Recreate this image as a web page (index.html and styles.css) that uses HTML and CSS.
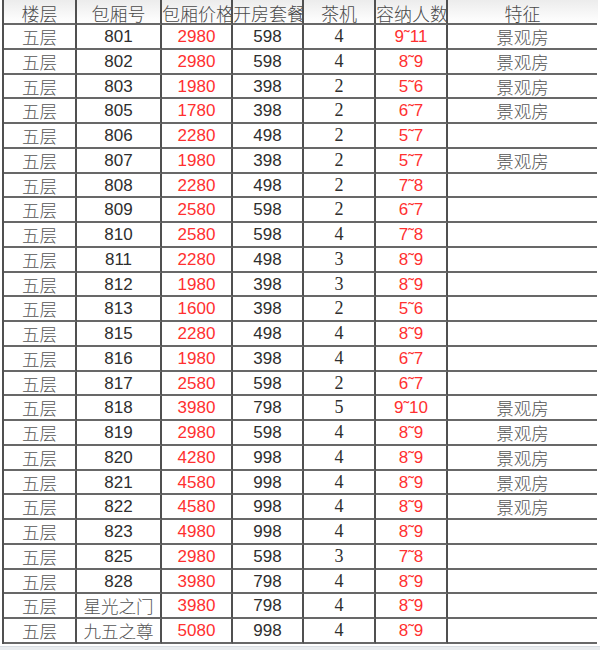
FILE: index.html
```html
<!DOCTYPE html>
<html lang="zh">
<head>
<meta charset="utf-8">
<title>包厢价格表</title>
<link rel="stylesheet" href="styles.css">
</head>
<body>
<div class="sheet">
  <div class="cell hd">楼层</div><div class="cell hd">包厢号</div><div class="cell hd">包厢价格</div><div class="cell hd">开房套餐</div><div class="cell hd">茶机</div><div class="cell hd">容纳人数</div><div class="cell hd last">特征</div>

  <div class="cell cn">五层</div><div class="cell num">801</div><div class="cell num red">2980</div><div class="cell num">598</div><div class="cell serif">4</div><div class="cell num red">9˜11</div><div class="cell cn last">景观房</div>
  <div class="cell cn">五层</div><div class="cell num">802</div><div class="cell num red">2980</div><div class="cell num">598</div><div class="cell serif">4</div><div class="cell num red">8˜9</div><div class="cell cn last">景观房</div>
  <div class="cell cn">五层</div><div class="cell num">803</div><div class="cell num red">1980</div><div class="cell num">398</div><div class="cell serif">2</div><div class="cell num red">5˜6</div><div class="cell cn last">景观房</div>
  <div class="cell cn">五层</div><div class="cell num">805</div><div class="cell num red">1780</div><div class="cell num">398</div><div class="cell serif">2</div><div class="cell num red">6˜7</div><div class="cell cn last">景观房</div>
  <div class="cell cn">五层</div><div class="cell num">806</div><div class="cell num red">2280</div><div class="cell num">498</div><div class="cell serif">2</div><div class="cell num red">5˜7</div><div class="cell cn last"></div>
  <div class="cell cn">五层</div><div class="cell num">807</div><div class="cell num red">1980</div><div class="cell num">398</div><div class="cell serif">2</div><div class="cell num red">5˜7</div><div class="cell cn last">景观房</div>
  <div class="cell cn">五层</div><div class="cell num">808</div><div class="cell num red">2280</div><div class="cell num">498</div><div class="cell serif">2</div><div class="cell num red">7˜8</div><div class="cell cn last"></div>
  <div class="cell cn">五层</div><div class="cell num">809</div><div class="cell num red">2580</div><div class="cell num">598</div><div class="cell serif">2</div><div class="cell num red">6˜7</div><div class="cell cn last"></div>
  <div class="cell cn">五层</div><div class="cell num">810</div><div class="cell num red">2580</div><div class="cell num">598</div><div class="cell serif">4</div><div class="cell num red">7˜8</div><div class="cell cn last"></div>
  <div class="cell cn">五层</div><div class="cell num">811</div><div class="cell num red">2280</div><div class="cell num">498</div><div class="cell serif">3</div><div class="cell num red">8˜9</div><div class="cell cn last"></div>
  <div class="cell cn">五层</div><div class="cell num">812</div><div class="cell num red">1980</div><div class="cell num">398</div><div class="cell serif">3</div><div class="cell num red">8˜9</div><div class="cell cn last"></div>
  <div class="cell cn">五层</div><div class="cell num">813</div><div class="cell num red">1600</div><div class="cell num">398</div><div class="cell serif">2</div><div class="cell num red">5˜6</div><div class="cell cn last"></div>
  <div class="cell cn">五层</div><div class="cell num">815</div><div class="cell num red">2280</div><div class="cell num">498</div><div class="cell serif">4</div><div class="cell num red">8˜9</div><div class="cell cn last"></div>
  <div class="cell cn">五层</div><div class="cell num">816</div><div class="cell num red">1980</div><div class="cell num">398</div><div class="cell serif">4</div><div class="cell num red">6˜7</div><div class="cell cn last"></div>
  <div class="cell cn">五层</div><div class="cell num">817</div><div class="cell num red">2580</div><div class="cell num">598</div><div class="cell serif">2</div><div class="cell num red">6˜7</div><div class="cell cn last"></div>
  <div class="cell cn">五层</div><div class="cell num">818</div><div class="cell num red">3980</div><div class="cell num">798</div><div class="cell serif">5</div><div class="cell num red">9˜10</div><div class="cell cn last">景观房</div>
  <div class="cell cn">五层</div><div class="cell num">819</div><div class="cell num red">2980</div><div class="cell num">598</div><div class="cell serif">4</div><div class="cell num red">8˜9</div><div class="cell cn last">景观房</div>
  <div class="cell cn">五层</div><div class="cell num">820</div><div class="cell num red">4280</div><div class="cell num">998</div><div class="cell serif">4</div><div class="cell num red">8˜9</div><div class="cell cn last">景观房</div>
  <div class="cell cn">五层</div><div class="cell num">821</div><div class="cell num red">4580</div><div class="cell num">998</div><div class="cell serif">4</div><div class="cell num red">8˜9</div><div class="cell cn last">景观房</div>
  <div class="cell cn">五层</div><div class="cell num">822</div><div class="cell num red">4580</div><div class="cell num">998</div><div class="cell serif">4</div><div class="cell num red">8˜9</div><div class="cell cn last">景观房</div>
  <div class="cell cn">五层</div><div class="cell num">823</div><div class="cell num red">4980</div><div class="cell num">998</div><div class="cell serif">4</div><div class="cell num red">8˜9</div><div class="cell cn last"></div>
  <div class="cell cn">五层</div><div class="cell num">825</div><div class="cell num red">2980</div><div class="cell num">598</div><div class="cell serif">3</div><div class="cell num red">7˜8</div><div class="cell cn last"></div>
  <div class="cell cn">五层</div><div class="cell num">828</div><div class="cell num red">3980</div><div class="cell num">798</div><div class="cell serif">4</div><div class="cell num red">8˜9</div><div class="cell cn last"></div>
  <div class="cell cn">五层</div><div class="cell cn">星光之门</div><div class="cell num red">3980</div><div class="cell num">798</div><div class="cell serif">4</div><div class="cell num red">8˜9</div><div class="cell cn last"></div>
  <div class="cell cn">五层</div><div class="cell cn">九五之尊</div><div class="cell num red">5080</div><div class="cell num">998</div><div class="cell serif">4</div><div class="cell num red">8˜9</div><div class="cell cn last"></div>
</div>
<div class="band"></div>
</body>
</html>
```

FILE: styles.css
```css
html, body {
  margin: 0;
  padding: 0;
  background: #ffffff;
  height: 650px;
  overflow: hidden;
}

body {
  display: flex;
  flex-direction: column;
}

.sheet {
  margin-left: 2px;
  width: 594px;
  border-left: 2px solid #505050;
  display: grid;
  grid-template-columns: 73px 85px 71px 71px 72px 72px 149px;
  grid-template-rows: 25px repeat(25, 24.76px);
  background: linear-gradient(to bottom, #ececec 0px, #fbfbfb 18px, #ffffff 25px, #ffffff 100%);
}

.cell {
  box-sizing: border-box;
  border-right: 2px solid #505050;
  border-bottom: 2px solid #686868;
  text-align: center;
  white-space: nowrap;
  overflow-x: clip;
  overflow-y: visible;
  line-height: 23px;
  color: #3a3a3a;
  font-family: "Liberation Sans", Arial, sans-serif;
  font-size: 17px;
}

.cell.last {
  border-right: none;
}

.hd {
  font-family: "Noto Sans CJK SC", sans-serif;
  font-size: 18px;
  font-weight: 300;
  color: #4a4a4a;
  padding-top: 3px;
  line-height: 20px;
}

.cn {
  font-family: "Noto Sans CJK SC", sans-serif;
  font-size: 17.5px;
  font-weight: 300;
  color: #555555;
}

.num {
  font-family: "Liberation Sans", Arial, sans-serif;
  color: #2e2e2e;
}

.serif {
  font-family: "Liberation Serif", "Times New Roman", serif;
  font-size: 18px;
  color: #2e2e2e;
}

.red {
  color: #ff3030;
}

.band {
  flex: 1;
  margin-top: 2px;
  background: #e9ecef;
  border-top: 1px solid #d8dde2;
}
```
